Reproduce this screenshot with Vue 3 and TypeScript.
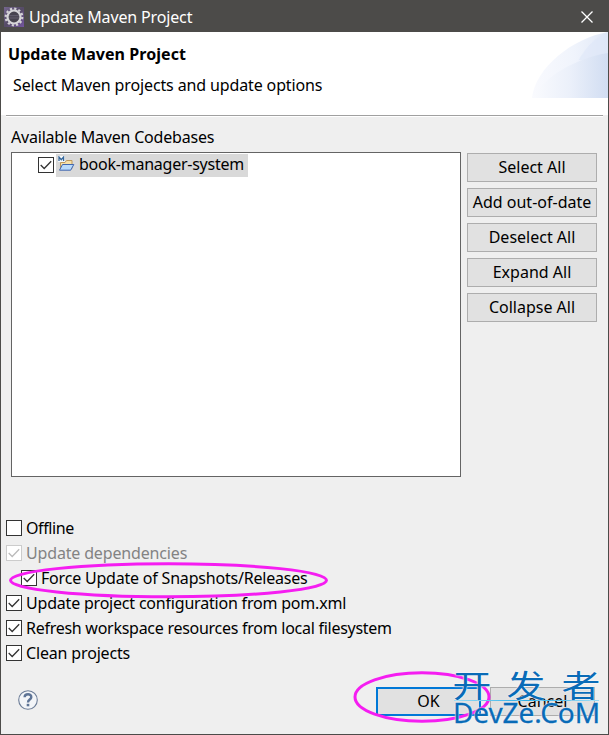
<script setup lang="ts">
interface Option {
  label: string
  checked: boolean
  disabled?: boolean
  nested?: boolean
}

const actions: string[] = ['Select All', 'Add out-of-date', 'Deselect All', 'Expand All', 'Collapse All']
const options: Option[] = [
  { label: 'Offline', checked: false },
  { label: 'Update dependencies', checked: true, disabled: true },
  { label: 'Force Update of Snapshots/Releases', checked: true, nested: true },
  { label: 'Update project configuration from pom.xml', checked: true },
  { label: 'Refresh workspace resources from local filesystem', checked: true },
  { label: 'Clean projects', checked: true },
]
</script>

<template>
  <div class="dialog">
    <div class="titlebar">
      <svg class="gear" width="20" height="20" viewBox="0 0 20 20">
        <defs>
          <linearGradient id="gearBg" x1="0" y1="0" x2="1" y2="1">
            <stop offset="0" stop-color="#75668f" /><stop offset=".5" stop-color="#554b66" /><stop offset="1" stop-color="#7355a0" />
          </linearGradient>
        </defs>
        <rect width="20" height="20" fill="url(#gearBg)" />
        <circle cx="10" cy="10" r="8.3" fill="none" stroke="#d4d2d6" stroke-width="2.2" stroke-dasharray="2.2 2.14" />
        <circle cx="10" cy="10" r="6.5" fill="#47434f" stroke="#d6d5d8" stroke-width="2.2" />
        <path d="M5 8.7h10M5 11h10" stroke="#666171" stroke-width="1" />
      </svg>
      <span class="title">Update Maven Project</span>
      <svg class="close" width="12" height="12" viewBox="0 0 12 12"><path d="M.5.5l11 11M11.5.5l-11 11" stroke="#fff" stroke-width="1.3" /></svg>
    </div>
    <header class="head">
      <div>
        <h1>Update Maven Project</h1>
        <p>Select Maven projects and update options</p>
      </div>
      <svg class="swoosh" width="76" height="66" viewBox="0 0 75 66" preserveAspectRatio="none">
        <defs>
          <linearGradient id="sw"><stop offset="0" stop-color="#f9fafe" /><stop offset=".55" stop-color="#f0f4fc" /><stop offset="1" stop-color="#e0e8f7" /></linearGradient>
          <linearGradient id="sw2"><stop offset="0" stop-color="#fafbfe" /><stop offset=".5" stop-color="#ebf0fa" /><stop offset="1" stop-color="#d1ddf2" /></linearGradient>
        </defs>
        <path d="M0 66C3 36 40 6 75 0V66Z" fill="url(#sw)" />
        <path d="M46 28C54 14 63 5 75 0V30Z" fill="#dce6f7" opacity=".55" />
        <path d="M0 66C12 45 43 26 75 21V66Z" fill="url(#sw2)" />
      </svg>
    </header>
    <div class="rule"></div>
    <main class="body">
      <div class="caption"><span class="t-caption">Available Maven Codebases</span></div>
      <div class="columns">
        <div class="list">
          <div class="item">
            <span class="check"><svg width="16" height="16" viewBox="0 0 16 16"><path d="M2.7 8L6.2 11.5L13.2 4.3" /></svg></span>
            <span class="entry">
              <svg width="17" height="16" viewBox="0 0 17 16">
                <path d="M2.5 13V6.5H7l1.5-2H14v8" fill="#f7e0a7" stroke="#bd995c" />
                <path d="M1.5 14.2L4.5 8.5H15.8L12.7 14.2Z" fill="#b9dafa" stroke="#4166ad" />
                <path d="M0 0h7v6H0z" fill="#f5f8fa" /><path d="M1 5V1l2.3 2.7L5.6 1v4" fill="none" stroke="#36679b" stroke-width="1.3" />
              </svg>
              <span class="t-item">book-manager-system</span>
            </span>
          </div>
        </div>
        <div class="actions">
          <button v-for="a in actions" :key="a" type="button" class="btn">{{ a }}</button>
        </div>
      </div>
      <div class="options">
        <div v-for="(o, i) in options" :key="o.label" class="option" :class="{ nested: o.nested, disabled: o.disabled }">
          <span class="check"><svg v-if="o.checked" width="16" height="16" viewBox="0 0 16 16"><path d="M2.7 8L6.2 11.5L13.2 4.3" /></svg></span>
          <span :class="'opt' + i">{{ o.label }}</span>
        </div>
      </div>
      <footer class="foot">
        <svg class="help" width="20" height="20" viewBox="0 0 20 20">
          <circle cx="10" cy="10" r="9.3" fill="#f3f5f8" stroke="#6c7d97" stroke-width="1.1" />
          <path d="M6.6 7.2C6.8 3.2 13.4 3.3 13.3 7.1C13.2 9.6 10 9.5 10 12.4" fill="none" stroke="#5e7496" stroke-width="2.4" />
          <rect x="8.7" y="13.8" width="2.6" height="2.5" fill="#5e7496" />
        </svg>
        <div class="confirm">
          <button type="button" class="btn ok">OK</button>
          <button type="button" class="btn">Cancel</button>
        </div>
      </footer>
    </main>
    <svg class="marks" width="609" height="735" viewBox="0 0 609 735">
      <ellipse cx="168.5" cy="580.3" rx="158" ry="16.5" />
      <ellipse cx="422" cy="697" rx="67" ry="24.2" />
    </svg>
    <div class="watermark">
      <div class="cn"><span>开</span><span>发</span><span>者</span></div>
      <div class="line"></div>
      <div class="en">DevZe.CoM</div>
    </div>
  </div>
</template>

<style>
body { margin: 0; background: #efefef; }
</style>
<style scoped>
* { box-sizing: border-box; }
.dialog { position: relative; width: 609px; height: 735px; overflow: hidden; background: #efefef; border: 1px solid #4c4b49; color: #000; font: 16px/24px "Noto Sans", "Noto Sans CJK SC", sans-serif; white-space: nowrap; }
.titlebar { height: 31px; background: #4c4b49; display: flex; align-items: center; padding: 0 15px 0 3px; color: #fff; }
.title { margin-left: 5px; flex: 1; letter-spacing: -.15px; }
.head { height: 83px; background: #fff; display: flex; justify-content: space-between; }
h1 { margin: 10px 0 0 7px; font-size: 16px; line-height: 24px; font-weight: 700; letter-spacing: .06px; }
p { margin: 7px 0 0 12px; letter-spacing: -.13px; }
.rule { height: 2px; margin: 0 5px; background: #a0a0a0; border-bottom: 1px solid #fff; }
.body { padding: 8px 11px 0 5px; }
.caption { height: 27px; padding-left: 5px; letter-spacing: -.2px; }
.columns { display: flex; gap: 6px; padding-left: 5px; }
.list { width: 450px; height: 325px; border: 1px solid #646464; background: #fff; padding: 0 0 0 26px; }
.item { display: flex; align-items: center; height: 24px; }
.check { width: 16px; height: 16px; flex: none; border: 1px solid #333; background: #fff; display: block; }
.check svg { display: block; margin: -1px; fill: none; stroke: #333; stroke-width: 1.3; }
.entry { display: flex; align-items: center; background: #d9d9d9; height: 23px; margin-left: 2px; padding: 0 4px 0 2px; gap: 4px; }
.entry svg { margin-top: -2px; }
.t-item { letter-spacing: -.24px; margin-top: -2px; }
.actions { display: flex; flex-direction: column; gap: 6px; padding-top: 1px; }
.btn { width: 130px; height: 29px; border: 1px solid #adadad; background: #e1e1e1; padding: 0; color: #000; font: inherit; line-height: 27px; border-radius: 0; }
.options { margin-top: 38px; }
.option { height: 25px; display: flex; align-items: center; gap: 4px; letter-spacing: -.2px; }
.opt0 { letter-spacing: -.4px; }
.opt1, .opt5 { letter-spacing: -.16px; }
.opt4 { letter-spacing: -.27px; }
.nested { padding-left: 15px; }
.disabled { color: #838383; }
.disabled .check { border-color: #ccc; }
.disabled .check svg { stroke: #bbb; }
.foot { display: flex; justify-content: space-between; padding: 22px 2px 0 12px; }
.help { margin-top: 3px; }
.confirm { display: flex; gap: 9px; }
.confirm .btn { width: 105px; }
.confirm .ok { border: 2px solid #0078d7; line-height: 25px; }
.marks { position: absolute; left: -1px; top: -1px; fill: none; stroke: #f51df1; stroke-width: 3; }
.watermark { position: absolute; left: 453px; top: 668px; width: 145px; color: #096bb7; text-shadow: 0 0 2px #fff, 0 0 1px #fff; }
.cn { display: flex; justify-content: space-between; height: 31px; font: 36px/29px "Noto Sans CJK SC", sans-serif; }
.cn span { transform: scale(1.08, .84); }
.line { height: 1px; background: linear-gradient(90deg, #9adcf5, #2bafe8, #9adcf5); }
.en { font-size: 28px; line-height: 24px; margin: -1px 0 0 -1px; letter-spacing: -.1px; -webkit-text-stroke: .3px #096bb7; }
</style>
